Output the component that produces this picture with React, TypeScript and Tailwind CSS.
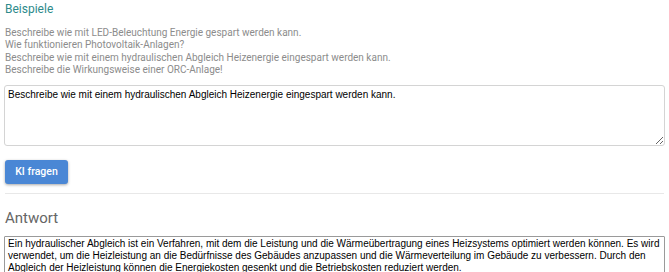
import { useState } from "react";

const examples = [
  "Beschreibe wie mit LED-Beleuchtung Energie gespart werden kann.",
  "Wie funktionieren Photovoltaik-Anlagen?",
  "Beschreibe wie mit einem hydraulischen Abgleich Heizenergie eingespart werden kann.",
  "Beschreibe die Wirkungsweise einer ORC-Anlage!",
];

export default function App() {
  const [prompt, setPrompt] = useState(examples[2]);

  return (
    <div className="w-[669px] bg-white px-[4px] font-['Roboto',sans-serif]">
      <h2 className="pl-[1px] pt-[1px] text-[12px] leading-[16px] text-[#2e8b8b]">Beispiele</h2>

      <ul className="mt-[10px] pl-[1px] text-[10px] leading-[12.4px] text-[#8c8c8c]">
        {examples.map((e) => (
          <li key={e}>{e}</li>
        ))}
      </ul>

      <textarea
        value={prompt}
        onChange={(e) => setPrompt(e.target.value)}
        className="mt-[8px] block h-[61px] w-full resize-y rounded-[3px] border border-[#d4d4d4] px-[3px] py-[3px] font-['Liberation_Sans',Arial,sans-serif] text-[10px] leading-[12px] text-black outline-none"
      />

      <button
        type="button"
        className="ml-[1px] mt-[14px] block h-[24px] w-[63px] rounded-[3px] bg-[#4a87d5] text-[10.5px] font-medium text-white shadow-[0_1px_3px_rgba(0,0,0,0.35)]"
      >
        KI fragen
      </button>

      <hr className="mx-[1px] mt-[9px] border-t border-[#e8e8e8]" />

      <h2 className="mt-[14px] pl-[1px] text-[15px] leading-[20px] text-[#666666]">Antwort</h2>

      <div className="mt-[8px] rounded-[1px] border border-[#9a9a9a] px-[3px] py-[1px] font-['Liberation_Sans',Arial,sans-serif] text-[10px] leading-[12px] text-black">
        Ein hydraulischer Abgleich ist ein Verfahren, mit dem die Leistung und die Wärmeübertragung eines Heizsystems
        optimiert werden können. Es wird verwendet, um die Heizleistung an die Bedürfnisse des Gebäudes anzupassen und
        die Wärmeverteilung im Gebäude zu verbessern. Durch den Abgleich der Heizleistung können die Energiekosten
        gesenkt und die Betriebskosten reduziert werden.
      </div>
    </div>
  );
}
